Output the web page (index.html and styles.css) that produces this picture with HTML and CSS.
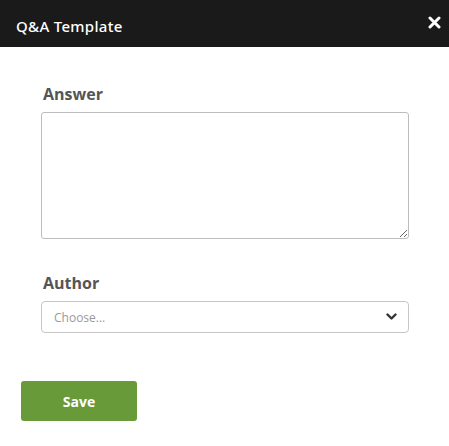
FILE: index.html
```html
<!DOCTYPE html>
<html>
<head>
<meta charset="utf-8">
<link rel="stylesheet" href="styles.css">
</head>
<body>
<div class="modal">
  <header class="modal-header">
    <h1 class="modal-title">Q&amp;A Template</h1>
    <button class="close-btn" aria-label="Close">
      <svg width="13" height="13" viewBox="0 0 13 13"><path d="M2 2 L11 11 M11 2 L2 11" stroke="#fff" stroke-width="3" stroke-linecap="round"/></svg>
    </button>
  </header>
  <div class="modal-body">
    <div class="field">
      <label class="field-label">Answer</label>
      <textarea class="textarea"></textarea>
    </div>
    <div class="field field-author">
      <label class="field-label">Author</label>
      <div class="select">
        <span class="select-placeholder">Choose...</span>
        <svg class="chevron" width="11" height="8" viewBox="0 0 11 8"><path d="M1.5 1.5 L5.5 5.5 L9.5 1.5" fill="none" stroke="#333" stroke-width="2.4" stroke-linecap="round" stroke-linejoin="round"/></svg>
      </div>
    </div>
  </div>
  <div class="modal-footer">
    <button class="save-btn">Save</button>
  </div>
</div>
</body>
</html>
```
FILE: styles.css
```css
html, body {
  margin: 0;
  padding: 0;
  background: #fff;
}
.modal {
  width: 449px;
  height: 446px;
  font-family: "Open Sans", "Liberation Sans", sans-serif;
}
.modal-header {
  height: 47px;
  background: #1a1a1a;
  display: flex;
  align-items: center;
  justify-content: space-between;
  padding: 4px 8px 0 16px;
  box-sizing: border-box;
}
.modal-title {
  margin: 0;
  color: #fff;
  font-family: "Noto Sans", "Open Sans", sans-serif;
  font-weight: 500;
  font-size: 15px;
  letter-spacing: 0.3px;
}
.close-btn {
  background: none;
  border: none;
  padding: 0;
  margin: -7px 0 0 0;
  display: flex;
}
.modal-body {
  padding: 36px 40px 0 41px;
}
.field {
  display: flex;
  flex-direction: column;
}
.field-label {
  font-weight: 700;
  font-size: 16px;
  color: #555;
  padding-left: 2px;
  line-height: 22px;
  margin-bottom: 7px;
}
.textarea {
  height: 127px;
  box-sizing: border-box;
  border: 1px solid #bdbdbd;
  border-radius: 3px;
  margin: 0;
  resize: vertical;
  font-family: inherit;
}
.field-author {
  margin-top: 33px;
}
.select {
  height: 32px;
  box-sizing: border-box;
  border: 1px solid #c6c6c6;
  border-radius: 4px;
  display: flex;
  align-items: center;
  justify-content: space-between;
  padding: 0 11px 0 12px;
}
.select-placeholder {
  font-size: 12px;
  color: #9a9a9a;
}
.modal-footer {
  padding: 48px 0 0 21px;
}
.save-btn {
  width: 116px;
  height: 40px;
  background: #689a3a;
  border: none;
  border-radius: 3px;
  color: #fff;
  font-family: "Open Sans", sans-serif;
  font-weight: 700;
  font-size: 14px;
  padding: 0;
}
```
